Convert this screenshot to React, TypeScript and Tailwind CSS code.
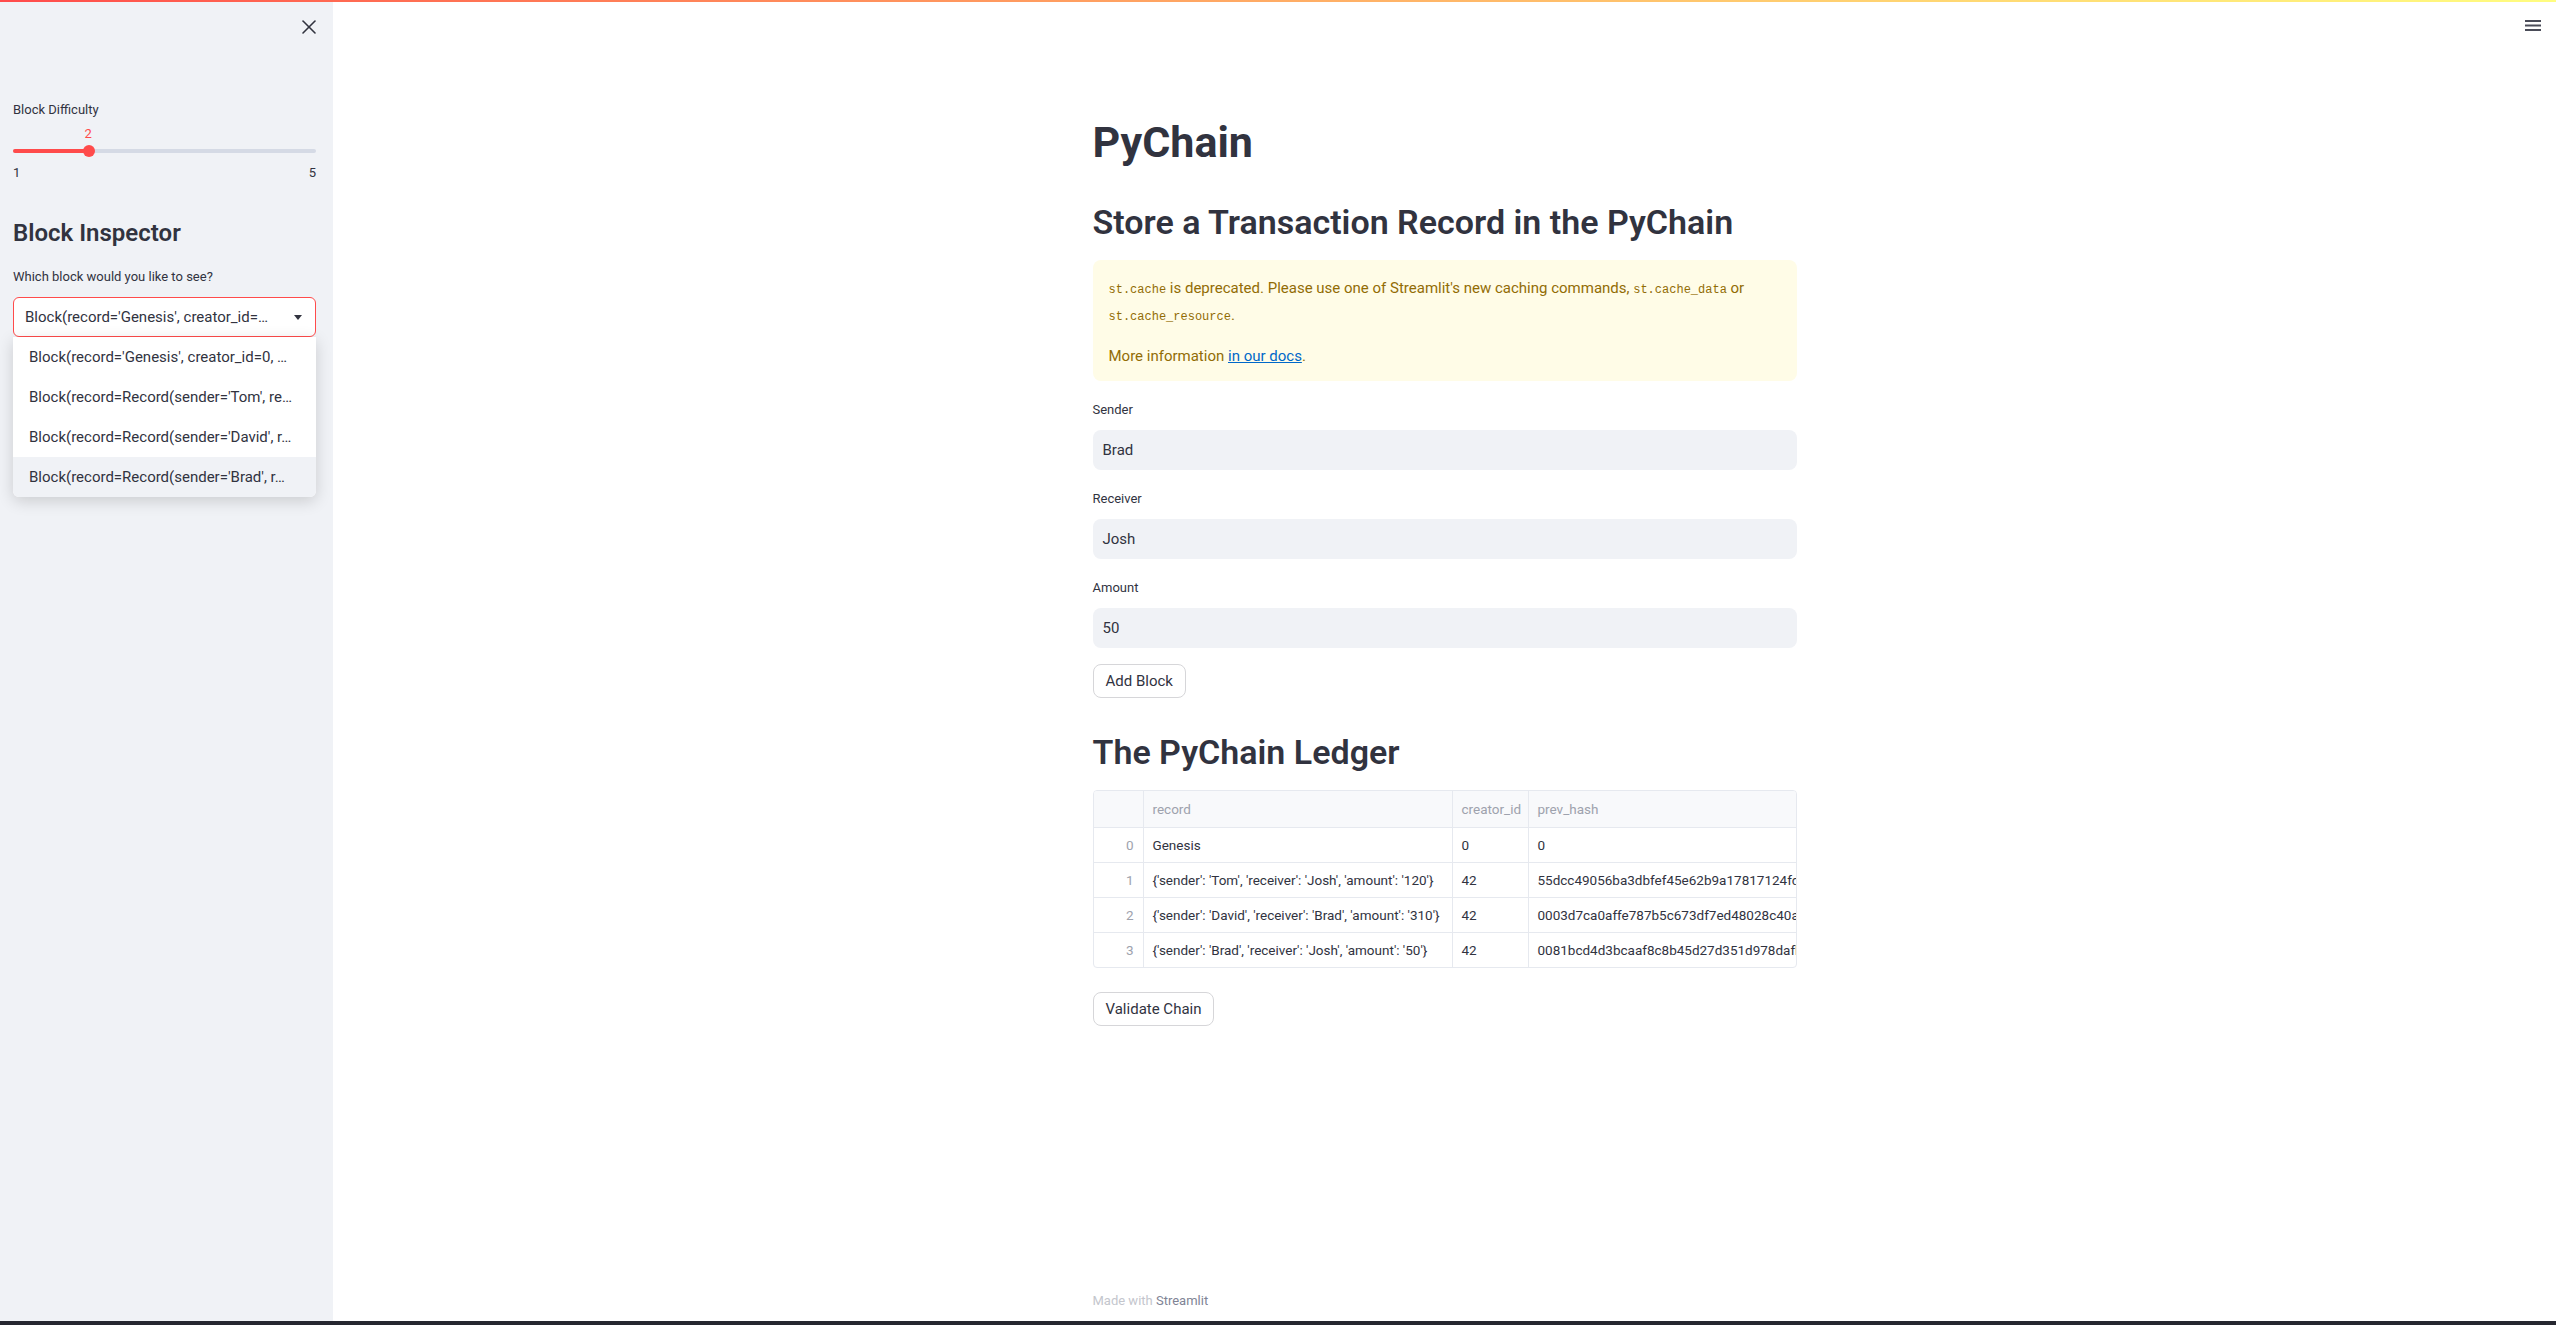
import { X } from 'lucide-react';

const options = [
    "Block(record='Genesis', creator_id=0, …",
    "Block(record=Record(sender='Tom', re…",
    "Block(record=Record(sender='David', r…",
    "Block(record=Record(sender='Brad', r…",
];

const ledger = [
    { record: 'Genesis', creator: '0', hash: '0' },
    {
        record: "{'sender': 'Tom', 'receiver': 'Josh', 'amount': '120'}",
        creator: '42',
        hash: '55dcc49056ba3dbfef45e62b9a17817124fd8254c9e0c0d7f4b0b2e6d5a7f6c0',
    },
    {
        record: "{'sender': 'David', 'receiver': 'Brad', 'amount': '310'}",
        creator: '42',
        hash: '0003d7ca0affe787b5c673df7ed48028c40a6a3e91b5c2d7f08e4a1b6c3d9e2f',
    },
    {
        record: "{'sender': 'Brad', 'receiver': 'Josh', 'amount': '50'}",
        creator: '42',
        hash: '0081bcd4d3bcaaf8c8b45d27d351d978dafb7a2e4c6b1d0f9e8a7c5b3d2e1f04',
    },
];

function Code({ children }: { children: string }) {
    return <span className="font-['Liberation_Mono',monospace] text-[12px]">{children}</span>;
}

function Field({ label, value }: { label: string; value: string }) {
    return (
        <>
            <div className="mt-[21px] text-[13px] leading-4">{label}</div>
            <div className="mt-[12px] flex h-[40px] items-center rounded-[8px] bg-[#f0f2f6] pl-[10px] text-[15px]">
                {value}
            </div>
        </>
    );
}

function Sidebar() {
    return (
        <aside className="w-[333px] shrink-0 bg-[#f0f2f6]">
            <div className="flex justify-end pr-[12px] pt-[12.5px]">
                <X size={24} strokeWidth={1.6} className="text-[#31333f]" />
            </div>

            <div className="pl-[13px] pr-[17px]">
                <div className="mt-[63.5px] text-[13px] leading-4">Block Difficulty</div>
                <div className="mt-[8px] h-4 pl-[71.5px] text-[13px] leading-4 text-[#ff4b4b]">2</div>
                <div className="mt-[3px] flex h-[12px] items-center">
                    <div className="relative h-[4px] w-full rounded-full bg-[#d5dae5]">
                        <div className="h-full w-[25%] rounded-full bg-[#ff4b4b]" />
                        <div className="absolute left-[25%] top-1/2 h-[12px] w-[12px] -translate-x-1/2 -translate-y-1/2 rounded-full bg-[#ff4b4b]" />
                    </div>
                </div>
                <div className="mt-[8px] flex justify-between text-[13px] leading-4">
                    <span>1</span>
                    <span>5</span>
                </div>

                <div className="mt-[37px] text-[24px] font-semibold leading-[30px]">Block Inspector</div>
                <div className="mt-[20.5px] text-[13px] leading-4">Which block would you like to see?</div>

                <div className="relative mt-[12.5px]">
                    <div className="flex h-[40px] items-center justify-between rounded-[6px] border border-[#ff4b4b] bg-white pl-[11px] pr-[13px] text-[15px]">
                        <span className="whitespace-nowrap">Block(record='Genesis', creator_id=…</span>
                        <svg width="8" height="5" viewBox="0 0 8 5">
                            <path d="M0 0h8L4 5z" fill="#31333f" />
                        </svg>
                    </div>
                    <div className="absolute left-0 right-0 top-full z-10 overflow-hidden rounded-b-[6px] bg-white shadow-[0_4px_16px_rgba(0,0,0,0.16)]">
                        {options.map((o, i) => (
                            <div
                                key={o}
                                className={`flex h-[40px] items-center whitespace-nowrap pl-[16px] text-[15px] ${i === 3 ? 'bg-[#f0f2f6]' : ''}`}
                            >
                                {o}
                            </div>
                        ))}
                    </div>
                </div>
            </div>
        </aside>
    );
}

function Ledger() {
    const cols = 'grid grid-cols-[50px_309px_76px_1fr]';
    return (
        <div className="mt-[16px] overflow-hidden rounded-[4px] border border-[#e6e9ef] text-[13.5px]">
            <div className={`${cols} h-[36px] bg-[#f8f9fb] text-[#9ea2ad]`}>
                <div className="border-r border-[#e6e9ef]" />
                <div className="flex items-center border-r border-[#e6e9ef] pl-[9px]">record</div>
                <div className="flex items-center border-r border-[#e6e9ef] pl-[9px]">creator_id</div>
                <div className="flex items-center pl-[9px]">prev_hash</div>
            </div>
            {ledger.map((r, i) => (
                <div key={i} className={`${cols} h-[35px] border-t border-[#e6e9ef]`}>
                    <div className="flex items-center justify-end border-r border-[#e6e9ef] pr-[9px] text-[#9ea2ad]">{i}</div>
                    <div className="flex items-center overflow-hidden whitespace-nowrap border-r border-[#e6e9ef] pl-[9px]">{r.record}</div>
                    <div className="flex items-center border-r border-[#e6e9ef] pl-[9px]">{r.creator}</div>
                    <div className="flex items-center overflow-hidden whitespace-nowrap pl-[9px]">{r.hash}</div>
                </div>
            ))}
        </div>
    );
}

export default function App() {
    return (
        <div className="flex h-[1325px] w-full flex-col overflow-hidden bg-white font-['Roboto',sans-serif] text-[#31333f]">
            <div className="h-[2px] shrink-0 bg-linear-to-r from-[#ff4b4b] to-[#fffd80]" />

            <div className="flex min-h-0 flex-1">
                <Sidebar />

                <main className="relative flex flex-1 flex-col">
                    <svg className="absolute right-[15px] top-[18px]" width="16" height="12" viewBox="0 0 16 12">
                        <path d="M0 1h16M0 5.5h16M0 10h16" stroke="#4a4c58" strokeWidth="1.8" />
                    </svg>

                    <div className="mx-auto flex w-[704px] flex-1 flex-col pt-[114px]">
                        <h1 className="text-[43px] font-bold leading-[52px]">PyChain</h1>
                        <h2 className="mt-[32px] text-[34px] font-semibold leading-[44px]">
                            Store a Transaction Record in the PyChain
                        </h2>

                        <div className="mt-[16px] rounded-[8px] bg-[#fffce7] px-[16px] pb-[12px] pt-[16px] text-[15px] leading-[25px] text-[#926c05]">
                            <p>
                                <Code>st.cache</Code> is deprecated. Please use one of Streamlit's new caching commands,{' '}
                                <Code>st.cache_data</Code> or
                                <br />
                                <Code>st.cache_resource</Code>.
                            </p>
                            <p className="mt-[14px]">
                                More information <span className="text-[#0068c9] underline">in our docs</span>.
                            </p>
                        </div>

                        <Field label="Sender" value="Brad" />
                        <Field label="Receiver" value="Josh" />
                        <Field label="Amount" value="50" />

                        <button className="mt-[16px] flex h-[34px] w-fit items-center rounded-[8px] border border-[#d6d6d9] bg-white px-[12px] text-[15px]">
                            Add Block
                        </button>

                        <h2 className="mt-[32px] text-[34px] font-semibold leading-[44px]">The PyChain Ledger</h2>

                        <Ledger />

                        <button className="mt-[24px] flex h-[34px] w-fit items-center rounded-[8px] border border-[#d6d6d9] bg-white px-[12px] text-[15px]">
                            Validate Chain
                        </button>

                        <div className="mt-auto pb-[12px] text-[13px] leading-4">
                            <span className="text-[#c4c6cd]">Made with </span>
                            <span className="text-[#808495]">Streamlit</span>
                        </div>
                    </div>
                </main>
            </div>

            <div className="h-[4px] shrink-0 bg-[#262730]" />
        </div>
    );
}
